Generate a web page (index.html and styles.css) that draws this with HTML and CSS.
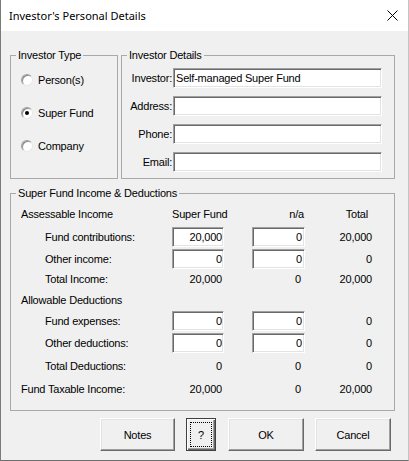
FILE: index.html
```html
<!DOCTYPE html>
<html>
<head>
<meta charset="utf-8">
<link rel="stylesheet" href="styles.css">
</head>
<body>
<div class="window">
  <div class="titlebar">
    <span class="title">Investor's Personal Details</span>
    <svg class="close" width="11" height="11" viewBox="0 0 11 11"><path d="M0.5 0.5 L10.5 10.5 M10.5 0.5 L0.5 10.5" stroke="#000" stroke-width="1" fill="none"/></svg>
  </div>
  <div class="content">
    <div class="toprow">
      <fieldset class="group type">
        <legend>Investor Type</legend>
        <div class="radios">
          <div class="radio"><span class="circle"></span>Person(s)</div>
          <div class="radio"><span class="circle on"></span>Super Fund</div>
          <div class="radio"><span class="circle"></span>Company</div>
        </div>
      </fieldset>
      <fieldset class="group details">
        <legend>Investor Details</legend>
        <div class="fields">
          <div class="field"><span class="flabel">Investor:</span><div class="tb wide">Self-managed Super Fund</div></div>
          <div class="field"><span class="flabel">Address:</span><div class="tb wide"></div></div>
          <div class="field"><span class="flabel">Phone:</span><div class="tb wide"></div></div>
          <div class="field"><span class="flabel">Email:</span><div class="tb wide"></div></div>
        </div>
      </fieldset>
    </div>
    <fieldset class="group income">
      <legend>Super Fund Income &amp; Deductions</legend>
      <div class="grid">
        <span class="lab">Assessable Income</span>
        <span class="sf num hdr">Super Fund</span>
        <span class="na num hdr">n/a</span>
        <span class="tot num hdr">Total</span>

        <span class="lab sub">Fund contributions:</span>
        <div class="sf tb num">20,000</div>
        <div class="na tb num">0</div>
        <span class="tot num">20,000</span>

        <span class="lab sub">Other income:</span>
        <div class="sf tb num">0</div>
        <div class="na tb num">0</div>
        <span class="tot num">0</span>

        <span class="lab sub">Total Income:</span>
        <span class="sf num val">20,000</span>
        <span class="na num val">0</span>
        <span class="tot num">20,000</span>

        <span class="lab">Allowable Deductions</span>

        <span class="lab sub">Fund expenses:</span>
        <div class="sf tb num">0</div>
        <div class="na tb num">0</div>
        <span class="tot num">0</span>

        <span class="lab sub">Other deductions:</span>
        <div class="sf tb num">0</div>
        <div class="na tb num">0</div>
        <span class="tot num">0</span>

        <span class="lab sub">Total Deductions:</span>
        <span class="sf num val">0</span>
        <span class="na num val">0</span>
        <span class="tot num">0</span>

        <span class="lab">Fund Taxable Income:</span>
        <span class="sf num val">20,000</span>
        <span class="na num val">0</span>
        <span class="tot num">20,000</span>
      </div>
    </fieldset>
    <div class="buttons">
      <div class="btn notes">Notes</div>
      <div class="btn help default">?</div>
      <div class="btn ok">OK</div>
      <div class="btn cancel">Cancel</div>
    </div>
  </div>
</div>
</body>
</html>
```
FILE: styles.css
```css
* { box-sizing: border-box; }
body {
  margin: 0;
  font-family: "Liberation Sans", Arial, sans-serif;
  font-size: 11px;
  letter-spacing: -0.2px;
  color: #000;
  background: #f0f0f0;
}
.window {
  width: 409px;
  height: 461px;
  background: #f0f0f0;
  border-left: 1px solid #7a7a7a;
  border-right: 1px solid #c4c4c4;
  border-bottom: 1px solid #6e6e6e;
  display: flex;
  flex-direction: column;
}
.titlebar {
  height: 31px;
  flex: none;
  background: #fff;
  display: flex;
  align-items: center;
  justify-content: space-between;
  padding: 0 10px 0 8px;
}
.title {
  font-family: "Noto Sans", sans-serif;
  font-size: 11px;
  letter-spacing: 0;
}
.close { display: block; }
.content {
  padding: 18px 0 0 9px;
}
.toprow {
  display: flex;
  gap: 3px;
  width: 385px;
}
fieldset.group {
  margin: 0;
  padding: 0;
  border: 1px solid #a9a9a9;
  min-width: 0;
}
legend {
  padding: 0 2px;
  margin-left: 5px;
  height: 13px;
  line-height: 13px;
  white-space: nowrap;
}
.type { width: 108px; height: 130px; }
.details { width: 274px; height: 130px; }
.radios {
  display: flex;
  flex-direction: column;
  padding: 1px 0 0 10px;
}
.radio {
  height: 33px;
  display: flex;
  align-items: center;
  gap: 5px;
  white-space: nowrap;
}
.circle {
  width: 12px;
  height: 12px;
  flex: none;
  border-radius: 50%;
  background: #fff;
  border: 1px solid #a0a0a0;
  border-right-color: #e8e8e8;
  border-bottom-color: #e8e8e8;
  box-shadow: inset 1px 1px 0 #8a8a8a;
  display: flex;
  align-items: center;
  justify-content: center;
}
.circle.on::after {
  content: "";
  width: 4px;
  height: 4px;
  border-radius: 50%;
  background: #000;
}
.fields {
  display: flex;
  flex-direction: column;
  gap: 8px;
  padding-top: 6px;
}
.field {
  display: flex;
  align-items: center;
  gap: 1px;
}
.flabel {
  width: 50px;
  text-align: right;
  white-space: nowrap;
}
.tb {
  height: 20px;
  background: #fff;
  border-top: 1px solid #a0a0a0;
  border-left: 1px solid #a0a0a0;
  border-right: 1px solid #fff;
  border-bottom: 1px solid #fff;
  box-shadow: inset 1px 1px 0 #696969, inset -1px -1px 0 #e3e3e3;
  line-height: 18px;
  padding: 0 1px 0 2px;
  white-space: nowrap;
}
.tb.wide { width: 209px; }
fieldset.income {
  width: 385px;
  height: 224px;
  margin-top: 8px;
}
.grid {
  display: grid;
  grid-template-columns: 151px 52px 28px 53px 67px;
  grid-template-rows: 22px 23px 21px 20px 21px 22px 22px 23px 24px;
  align-items: center;
  padding: 3px 0 0 10px;
}
.grid > * { white-space: nowrap; }
.lab { grid-column: 1; }
.lab.sub { padding-left: 24px; }
.sf { grid-column: 2; }
.na { grid-column: 4; }
.tot { grid-column: 5; }
.num { text-align: right; }
.sf.hdr { padding-right: 3px; }
.na.hdr { padding-right: 1px; }
.tot.hdr { padding-right: 4px; }
.sf.val { padding-right: 2px; }
.na.val { padding-right: 4px; }
.sf.tb { padding-right: 1px; }
.na.tb { padding-right: 2px; }
.buttons {
  display: flex;
  gap: 11px;
  margin-top: 7px;
  padding-left: 90px;
}
.btn {
  height: 33px;
  display: flex;
  align-items: center;
  justify-content: center;
  background: #f0f0f0;
  border-top: 1px solid #fff;
  border-left: 1px solid #fff;
  border-right: 1px solid #696969;
  border-bottom: 1px solid #696969;
  box-shadow: inset -1px -1px 0 #a0a0a0, inset 1px 1px 0 #e3e3e3;
}
.notes { width: 75px; }
.help { width: 30px; }
.ok { width: 76px; margin-left: 1px; }
.cancel { width: 76px; }
.btn.default {
  border: 1px solid #404040;
  box-shadow: inset 1px 1px 0 #fff, inset -1px -1px 0 #696969, inset -2px -2px 0 #a0a0a0;
  outline: 1px dotted #000;
  outline-offset: -5px;
}
```
